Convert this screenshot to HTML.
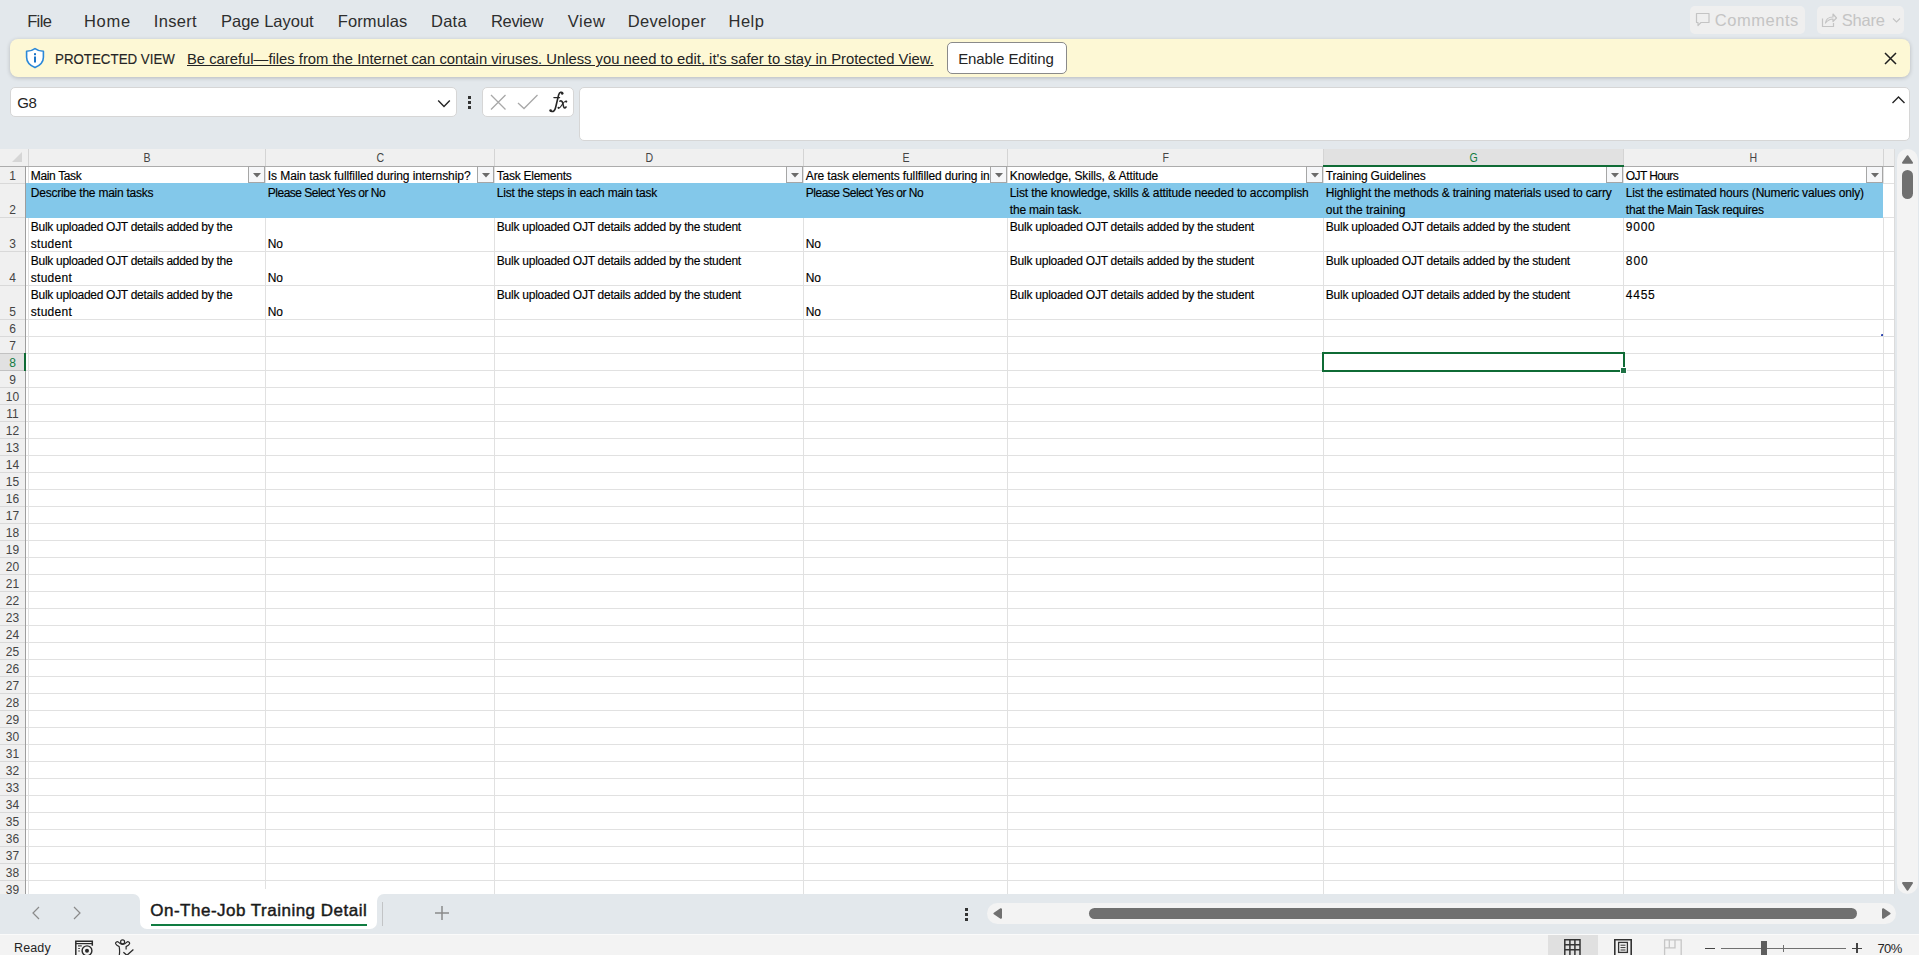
<!DOCTYPE html>
<html><head><meta charset="utf-8"><style>
html,body{margin:0;padding:0;}
body{width:1919px;height:955px;overflow:hidden;position:relative;background:#e3e8ec;font-family:"Liberation Sans", sans-serif;}
.a{position:absolute;}
.t{position:absolute;white-space:pre;font-family:"Liberation Sans", sans-serif;}
</style></head><body>
<div class="a" style="left:1690px;top:6px;width:115px;height:28px;background:#efefef;border-radius:5px;"></div><div class="a" style="left:1817px;top:6px;width:87px;height:28px;background:#efefef;border-radius:5px;"></div><div class="a" style="left:10px;top:39px;width:1900px;height:38px;background:#fdf8d5;border-radius:8px;box-shadow:0 1px 4px rgba(0,0,0,0.2);"></div><div class="a" style="left:947px;top:42px;width:120px;height:32px;background:#ffffff;border:1px solid #8a8a8a;border-radius:5px;box-sizing:border-box;"></div><div class="a" style="left:10px;top:87px;width:447px;height:30px;background:#fff;border:1px solid #d6d6d6;border-radius:5px;box-sizing:border-box;"></div><div class="a" style="left:482px;top:87px;width:92px;height:30px;background:#fff;border:1px solid #d6d6d6;border-radius:5px;box-sizing:border-box;"></div><div class="a" style="left:579px;top:87px;width:331px;height:54px;background:#fff;border:1px solid #d6d6d6;border-radius:5px;box-sizing:border-box;width:1331px;"></div><div class="a" style="left:468px;top:96px;width:3px;height:3px;background:#333;"></div><div class="a" style="left:468px;top:101px;width:3px;height:3px;background:#333;"></div><div class="a" style="left:468px;top:106px;width:3px;height:3px;background:#333;"></div><div class="a" style="left:0px;top:149px;width:1894px;height:745px;background:#ffffff;"></div><div class="a" style="left:0px;top:149px;width:1894px;height:17px;background:#f0f0f0;"></div><div class="a" style="left:0px;top:149px;width:25px;height:745px;background:#f0f0f0;"></div><div class="a" style="left:1323px;top:149px;width:300px;height:17px;background:#e1e1e1;"></div><div class="a" style="left:0px;top:166px;width:1894px;height:1px;background:#acacac;"></div><div class="a" style="left:0px;top:354px;width:25px;height:16px;background:#e1e1e1;"></div><div class="a" style="left:26px;top:183px;width:1857px;height:35px;background:#83c8ea;"></div><div class="a" style="left:0px;top:251px;width:25px;height:1px;background:#d9d9d9;"></div><div class="a" style="left:26px;top:251px;width:1868px;height:1px;background:#e1e1e1;"></div><div class="a" style="left:0px;top:285px;width:25px;height:1px;background:#d9d9d9;"></div><div class="a" style="left:26px;top:285px;width:1868px;height:1px;background:#e1e1e1;"></div><div class="a" style="left:0px;top:319px;width:25px;height:1px;background:#d9d9d9;"></div><div class="a" style="left:26px;top:319px;width:1868px;height:1px;background:#e1e1e1;"></div><div class="a" style="left:0px;top:336px;width:25px;height:1px;background:#d9d9d9;"></div><div class="a" style="left:26px;top:336px;width:1868px;height:1px;background:#e1e1e1;"></div><div class="a" style="left:0px;top:353px;width:25px;height:1px;background:#d9d9d9;"></div><div class="a" style="left:26px;top:353px;width:1868px;height:1px;background:#e1e1e1;"></div><div class="a" style="left:0px;top:370px;width:25px;height:1px;background:#d9d9d9;"></div><div class="a" style="left:26px;top:370px;width:1868px;height:1px;background:#e1e1e1;"></div><div class="a" style="left:0px;top:387px;width:25px;height:1px;background:#d9d9d9;"></div><div class="a" style="left:26px;top:387px;width:1868px;height:1px;background:#e1e1e1;"></div><div class="a" style="left:0px;top:404px;width:25px;height:1px;background:#d9d9d9;"></div><div class="a" style="left:26px;top:404px;width:1868px;height:1px;background:#e1e1e1;"></div><div class="a" style="left:0px;top:421px;width:25px;height:1px;background:#d9d9d9;"></div><div class="a" style="left:26px;top:421px;width:1868px;height:1px;background:#e1e1e1;"></div><div class="a" style="left:0px;top:438px;width:25px;height:1px;background:#d9d9d9;"></div><div class="a" style="left:26px;top:438px;width:1868px;height:1px;background:#e1e1e1;"></div><div class="a" style="left:0px;top:455px;width:25px;height:1px;background:#d9d9d9;"></div><div class="a" style="left:26px;top:455px;width:1868px;height:1px;background:#e1e1e1;"></div><div class="a" style="left:0px;top:472px;width:25px;height:1px;background:#d9d9d9;"></div><div class="a" style="left:26px;top:472px;width:1868px;height:1px;background:#e1e1e1;"></div><div class="a" style="left:0px;top:489px;width:25px;height:1px;background:#d9d9d9;"></div><div class="a" style="left:26px;top:489px;width:1868px;height:1px;background:#e1e1e1;"></div><div class="a" style="left:0px;top:506px;width:25px;height:1px;background:#d9d9d9;"></div><div class="a" style="left:26px;top:506px;width:1868px;height:1px;background:#e1e1e1;"></div><div class="a" style="left:0px;top:523px;width:25px;height:1px;background:#d9d9d9;"></div><div class="a" style="left:26px;top:523px;width:1868px;height:1px;background:#e1e1e1;"></div><div class="a" style="left:0px;top:540px;width:25px;height:1px;background:#d9d9d9;"></div><div class="a" style="left:26px;top:540px;width:1868px;height:1px;background:#e1e1e1;"></div><div class="a" style="left:0px;top:557px;width:25px;height:1px;background:#d9d9d9;"></div><div class="a" style="left:26px;top:557px;width:1868px;height:1px;background:#e1e1e1;"></div><div class="a" style="left:0px;top:574px;width:25px;height:1px;background:#d9d9d9;"></div><div class="a" style="left:26px;top:574px;width:1868px;height:1px;background:#e1e1e1;"></div><div class="a" style="left:0px;top:591px;width:25px;height:1px;background:#d9d9d9;"></div><div class="a" style="left:26px;top:591px;width:1868px;height:1px;background:#e1e1e1;"></div><div class="a" style="left:0px;top:608px;width:25px;height:1px;background:#d9d9d9;"></div><div class="a" style="left:26px;top:608px;width:1868px;height:1px;background:#e1e1e1;"></div><div class="a" style="left:0px;top:625px;width:25px;height:1px;background:#d9d9d9;"></div><div class="a" style="left:26px;top:625px;width:1868px;height:1px;background:#e1e1e1;"></div><div class="a" style="left:0px;top:642px;width:25px;height:1px;background:#d9d9d9;"></div><div class="a" style="left:26px;top:642px;width:1868px;height:1px;background:#e1e1e1;"></div><div class="a" style="left:0px;top:659px;width:25px;height:1px;background:#d9d9d9;"></div><div class="a" style="left:26px;top:659px;width:1868px;height:1px;background:#e1e1e1;"></div><div class="a" style="left:0px;top:676px;width:25px;height:1px;background:#d9d9d9;"></div><div class="a" style="left:26px;top:676px;width:1868px;height:1px;background:#e1e1e1;"></div><div class="a" style="left:0px;top:693px;width:25px;height:1px;background:#d9d9d9;"></div><div class="a" style="left:26px;top:693px;width:1868px;height:1px;background:#e1e1e1;"></div><div class="a" style="left:0px;top:710px;width:25px;height:1px;background:#d9d9d9;"></div><div class="a" style="left:26px;top:710px;width:1868px;height:1px;background:#e1e1e1;"></div><div class="a" style="left:0px;top:727px;width:25px;height:1px;background:#d9d9d9;"></div><div class="a" style="left:26px;top:727px;width:1868px;height:1px;background:#e1e1e1;"></div><div class="a" style="left:0px;top:744px;width:25px;height:1px;background:#d9d9d9;"></div><div class="a" style="left:26px;top:744px;width:1868px;height:1px;background:#e1e1e1;"></div><div class="a" style="left:0px;top:761px;width:25px;height:1px;background:#d9d9d9;"></div><div class="a" style="left:26px;top:761px;width:1868px;height:1px;background:#e1e1e1;"></div><div class="a" style="left:0px;top:778px;width:25px;height:1px;background:#d9d9d9;"></div><div class="a" style="left:26px;top:778px;width:1868px;height:1px;background:#e1e1e1;"></div><div class="a" style="left:0px;top:795px;width:25px;height:1px;background:#d9d9d9;"></div><div class="a" style="left:26px;top:795px;width:1868px;height:1px;background:#e1e1e1;"></div><div class="a" style="left:0px;top:812px;width:25px;height:1px;background:#d9d9d9;"></div><div class="a" style="left:26px;top:812px;width:1868px;height:1px;background:#e1e1e1;"></div><div class="a" style="left:0px;top:829px;width:25px;height:1px;background:#d9d9d9;"></div><div class="a" style="left:26px;top:829px;width:1868px;height:1px;background:#e1e1e1;"></div><div class="a" style="left:0px;top:846px;width:25px;height:1px;background:#d9d9d9;"></div><div class="a" style="left:26px;top:846px;width:1868px;height:1px;background:#e1e1e1;"></div><div class="a" style="left:0px;top:863px;width:25px;height:1px;background:#d9d9d9;"></div><div class="a" style="left:26px;top:863px;width:1868px;height:1px;background:#e1e1e1;"></div><div class="a" style="left:0px;top:880px;width:25px;height:1px;background:#d9d9d9;"></div><div class="a" style="left:26px;top:880px;width:1868px;height:1px;background:#e1e1e1;"></div><div class="a" style="left:0px;top:897px;width:25px;height:1px;background:#d9d9d9;"></div><div class="a" style="left:26px;top:897px;width:1868px;height:1px;background:#e1e1e1;"></div><div class="a" style="left:0px;top:183px;width:25px;height:1px;background:#d9d9d9;"></div><div class="a" style="left:0px;top:217px;width:25px;height:1px;background:#d9d9d9;"></div><div class="a" style="left:1883px;top:217px;width:11px;height:1px;background:#e1e1e1;"></div><div class="a" style="left:1883px;top:183px;width:11px;height:1px;background:#e1e1e1;"></div><div class="a" style="left:1881px;top:334px;width:2px;height:2px;background:#3048b0;border-radius:1px 0 0 0;"></div><div class="a" style="left:1894px;top:149px;width:1px;height:745px;background:#dcdcdc;"></div><div class="a" style="left:265px;top:149px;width:1px;height:17px;background:#d4d4d4;"></div><div class="a" style="left:265px;top:167px;width:1px;height:16px;background:#e1e1e1;"></div><div class="a" style="left:265px;top:218px;width:1px;height:676px;background:#e1e1e1;"></div><div class="a" style="left:494px;top:149px;width:1px;height:17px;background:#d4d4d4;"></div><div class="a" style="left:494px;top:167px;width:1px;height:16px;background:#e1e1e1;"></div><div class="a" style="left:494px;top:218px;width:1px;height:676px;background:#e1e1e1;"></div><div class="a" style="left:803px;top:149px;width:1px;height:17px;background:#d4d4d4;"></div><div class="a" style="left:803px;top:167px;width:1px;height:16px;background:#e1e1e1;"></div><div class="a" style="left:803px;top:218px;width:1px;height:676px;background:#e1e1e1;"></div><div class="a" style="left:1007px;top:149px;width:1px;height:17px;background:#d4d4d4;"></div><div class="a" style="left:1007px;top:167px;width:1px;height:16px;background:#e1e1e1;"></div><div class="a" style="left:1007px;top:218px;width:1px;height:676px;background:#e1e1e1;"></div><div class="a" style="left:1323px;top:149px;width:1px;height:17px;background:#d4d4d4;"></div><div class="a" style="left:1323px;top:167px;width:1px;height:16px;background:#e1e1e1;"></div><div class="a" style="left:1323px;top:218px;width:1px;height:676px;background:#e1e1e1;"></div><div class="a" style="left:1623px;top:149px;width:1px;height:17px;background:#d4d4d4;"></div><div class="a" style="left:1623px;top:167px;width:1px;height:16px;background:#e1e1e1;"></div><div class="a" style="left:1623px;top:218px;width:1px;height:676px;background:#e1e1e1;"></div><div class="a" style="left:1883px;top:149px;width:1px;height:17px;background:#d4d4d4;"></div><div class="a" style="left:1883px;top:167px;width:1px;height:16px;background:#e1e1e1;"></div><div class="a" style="left:1883px;top:218px;width:1px;height:676px;background:#e1e1e1;"></div><div class="a" style="left:25px;top:166px;width:1px;height:728px;background:#9e9e9e;"></div><div class="a" style="left:28px;top:149px;width:1px;height:17px;background:#d4d4d4;"></div><div class="a" style="left:28px;top:167px;width:1px;height:16px;background:#e1e1e1;"></div><div class="a" style="left:28px;top:218px;width:1px;height:676px;background:#e1e1e1;"></div><div class="a" style="left:26px;top:183px;width:2px;height:35px;background:#83c8ea;"></div><div class="a" style="left:0px;top:353px;width:24px;height:1px;background:#c2c2c2;"></div><div class="a" style="left:0px;top:370px;width:24px;height:1px;background:#c2c2c2;"></div><div class="a" style="left:24px;top:353px;width:2px;height:18px;background:#0f6b35;"></div><svg class="a" style="left:11px;top:152px" width="12" height="11"><polygon points="11,0 11,10 1,10" fill="#d6d6d6"/></svg><div class="a" style="left:248px;top:166px;width:17px;height:17px;background:#f6f7f9;border:1px solid #a6a6a6;box-sizing:border-box;"></div><svg class="a" style="left:253px;top:173px" width="8" height="5"><polygon points="0,0 8,0 4,4.5" fill="#6b6b6b"/></svg><div class="a" style="left:477px;top:166px;width:17px;height:17px;background:#f6f7f9;border:1px solid #a6a6a6;box-sizing:border-box;"></div><svg class="a" style="left:482px;top:173px" width="8" height="5"><polygon points="0,0 8,0 4,4.5" fill="#6b6b6b"/></svg><div class="a" style="left:786px;top:166px;width:17px;height:17px;background:#f6f7f9;border:1px solid #a6a6a6;box-sizing:border-box;"></div><svg class="a" style="left:791px;top:173px" width="8" height="5"><polygon points="0,0 8,0 4,4.5" fill="#6b6b6b"/></svg><div class="a" style="left:990px;top:166px;width:17px;height:17px;background:#f6f7f9;border:1px solid #a6a6a6;box-sizing:border-box;"></div><svg class="a" style="left:995px;top:173px" width="8" height="5"><polygon points="0,0 8,0 4,4.5" fill="#6b6b6b"/></svg><div class="a" style="left:1306px;top:166px;width:17px;height:17px;background:#f6f7f9;border:1px solid #a6a6a6;box-sizing:border-box;"></div><svg class="a" style="left:1311px;top:173px" width="8" height="5"><polygon points="0,0 8,0 4,4.5" fill="#6b6b6b"/></svg><div class="a" style="left:1606px;top:166px;width:17px;height:17px;background:#f6f7f9;border:1px solid #a6a6a6;box-sizing:border-box;"></div><svg class="a" style="left:1611px;top:173px" width="8" height="5"><polygon points="0,0 8,0 4,4.5" fill="#6b6b6b"/></svg><div class="a" style="left:1866px;top:166px;width:17px;height:17px;background:#f6f7f9;border:1px solid #a6a6a6;box-sizing:border-box;"></div><svg class="a" style="left:1871px;top:173px" width="8" height="5"><polygon points="0,0 8,0 4,4.5" fill="#6b6b6b"/></svg><div class="a" style="left:1323px;top:165px;width:301px;height:2px;background:#0f6b35;"></div><div class="a" style="left:1322px;top:352px;width:303px;height:20px;border:2px solid #0f6b35;box-sizing:border-box;"></div><div class="a" style="left:1620px;top:367px;width:5px;height:5px;background:#1e7145;border:1px solid #fff;box-sizing:content-box;"></div><div class="a" style="left:1897px;top:149px;width:21px;height:745px;background:#f3f3f3;border-radius:10.5px;"></div><svg class="a" style="left:1901px;top:154px" width="13" height="11"><polygon points="6.5,2.2 11,8.8 2,8.8" fill="#707070" stroke="#707070" stroke-width="2" stroke-linejoin="round"/></svg><div class="a" style="left:1902px;top:170px;width:11px;height:29px;background:#707070;border-radius:5.5px;"></div><svg class="a" style="left:1901px;top:881px" width="13" height="11"><polygon points="2,2 11,2 6.5,8.6" fill="#707070" stroke="#707070" stroke-width="2" stroke-linejoin="round"/></svg><div class="a" style="left:0px;top:894px;width:1919px;height:40px;background:#e3e8ec;"></div><div class="a" style="left:132px;top:894px;width:8px;height:8px;background:#ffffff;"></div><div class="a" style="left:377px;top:894px;width:8px;height:8px;background:#ffffff;"></div><div class="a" style="left:120px;top:894px;width:20px;height:20px;background:#e3e8ec;border-radius:0 7px 0 0;"></div><div class="a" style="left:377px;top:894px;width:20px;height:20px;background:#e3e8ec;border-radius:7px 0 0 0;"></div><div class="a" style="left:140px;top:889px;width:237px;height:40px;background:#ffffff;border-radius:0 0 7px 7px;"></div><div class="a" style="left:151px;top:924px;width:216px;height:2px;background:#107c41;"></div><div class="a" style="left:382px;top:902px;width:1px;height:24px;background:#c2c4c6;"></div><div class="a" style="left:987px;top:903px;width:909px;height:21px;background:#f3f3f3;border-radius:10.5px;"></div><div class="a" style="left:1089px;top:908px;width:768px;height:11px;background:#707070;border-radius:5.5px;"></div><svg class="a" style="left:992px;top:907px" width="11" height="13"><polygon points="9,2.2 9,10.8 2.4,6.5" fill="#707070" stroke="#707070" stroke-width="2" stroke-linejoin="round"/></svg><svg class="a" style="left:1881px;top:907px" width="11" height="13"><polygon points="2,2.2 2,10.8 8.6,6.5" fill="#707070" stroke="#707070" stroke-width="2" stroke-linejoin="round"/></svg><div class="a" style="left:965px;top:908px;width:3px;height:3px;background:#333;"></div><div class="a" style="left:965px;top:913px;width:3px;height:3px;background:#333;"></div><div class="a" style="left:965px;top:918px;width:3px;height:3px;background:#333;"></div><div class="a" style="left:0px;top:934px;width:1919px;height:21px;background:#f3f3f3;"></div><div class="a" style="left:0px;top:934px;width:1919px;height:1px;background:#fafafa;"></div><div class="a" style="left:1548px;top:935px;width:50px;height:20px;background:#e0e0e0;"></div><div class="a" style="left:1705px;top:947.5px;width:10px;height:1.2px;background:#444;"></div><div class="a" style="left:1721px;top:948px;width:125px;height:1px;background:#707070;"></div><div class="a" style="left:1761px;top:941px;width:6px;height:14px;background:#5e5e5e;"></div><div class="a" style="left:1783px;top:945px;width:1px;height:7px;background:#707070;"></div><div class="a" style="left:1852px;top:947.5px;width:10px;height:1.2px;background:#444;"></div><div class="a" style="left:1856.4px;top:943px;width:1.2px;height:10px;background:#444;"></div>
<svg class="a" style="left:24px;top:47px" width="22" height="22" viewBox="0 0 22 22">
<path d="M11 1.6 C8.2 3.6 5.6 4.3 2.6 4.3 L2.6 10.2 C2.6 15 6 18.4 11 20.6 C16 18.4 19.4 15 19.4 10.2 L19.4 4.3 C16.4 4.3 13.8 3.6 11 1.6 Z" fill="#ffffff" stroke="#2b88d8" stroke-width="1.6" stroke-linejoin="round"/>
<rect x="10" y="9.5" width="2" height="6" fill="#1a73c7"/><rect x="10" y="6.2" width="2" height="2" fill="#1a73c7"/></svg><svg class="a" style="left:1884px;top:52px" width="13" height="13"><path d="M1 1 L12 12 M12 1 L1 12" stroke="#1f1f1f" stroke-width="1.5"/></svg><svg class="a" style="left:1695px;top:12px" width="16" height="15"><path d="M1.5 1.5 H14 V10.5 H6 L3 13.5 V10.5 H1.5 Z" fill="none" stroke="#c4c4c4" stroke-width="1.2" stroke-linejoin="round"/></svg><svg class="a" style="left:1821px;top:11px" width="17" height="17"><path d="M1.5 7.5 V15.5 H12.5 V12" fill="none" stroke="#c4c4c4" stroke-width="1.2"/><path d="M4.5 12 C5 8 8 6 12 6 V3 L15.5 7 L12 10.5 V8 C9 8 6.5 9.5 4.5 12 Z" fill="none" stroke="#c4c4c4" stroke-width="1.2" stroke-linejoin="round"/></svg><svg class="a" style="left:1892px;top:17px" width="9" height="7"><path d="M1 1.5 L4.5 5 L8 1.5" fill="none" stroke="#c4c4c4" stroke-width="1.2"/></svg><svg class="a" style="left:437px;top:99px" width="14" height="10"><path d="M1.2 1.5 L7 7.5 L12.8 1.5" fill="none" stroke="#242424" stroke-width="1.4"/></svg><svg class="a" style="left:490px;top:94px" width="17" height="17"><path d="M1 1 L15.5 15.5 M15.5 1 L1 15.5" stroke="#a8a8a8" stroke-width="1.3"/></svg><svg class="a" style="left:517px;top:94px" width="22" height="16"><path d="M1 9 L7 14.5 L20.5 1" fill="none" stroke="#a8a8a8" stroke-width="1.3"/></svg><svg class="a" style="left:540px;top:86px" width="40" height="32" viewBox="0 0 40 32"><g fill="none" stroke="#262626" stroke-linecap="round"><path d="M22.6 7.2 C21.8 5.6 19.6 5.9 18.6 9 L15.6 21.5 C14.9 24.6 13.4 25.9 11.2 25.3" stroke-width="1.6"/><path d="M13.9 11.6 H19.6" stroke-width="1.3"/><path d="M19.9 15.1 C21.3 14.4 22.2 15.3 22.6 16.8 L23.6 20.6 C24.1 22.4 25.1 22.4 26 21" stroke-width="1.6"/><path d="M26.4 15.4 C25.2 14.9 24.2 15.6 22.7 17.7 L20.6 20.7 C19.8 21.8 19.1 22 18.5 21.6" stroke-width="1.1"/></g><g fill="#262626"><circle cx="22.2" cy="7.5" r="1.2"/><circle cx="10.6" cy="24.6" r="1.3"/><circle cx="26.2" cy="15.6" r="1.1"/><circle cx="18.6" cy="21.8" r="1.1"/></g></svg><svg class="a" style="left:1891px;top:95px" width="15" height="10"><path d="M1.5 8 L7.5 2 L13.5 8" fill="none" stroke="#242424" stroke-width="1.4"/></svg><svg class="a" style="left:31px;top:906px" width="10" height="14"><path d="M8 1 L2 7 L8 13" fill="none" stroke="#8a8a8a" stroke-width="1.2"/></svg><svg class="a" style="left:72px;top:906px" width="10" height="14"><path d="M2 1 L8 7 L2 13" fill="none" stroke="#8a8a8a" stroke-width="1.2"/></svg><svg class="a" style="left:434px;top:905px" width="16" height="16"><path d="M8 1 V15 M1 8 H15" stroke="#8a8a8a" stroke-width="1.5"/></svg><svg class="a" style="left:70px;top:935px" width="70" height="20" viewBox="70 935 70 20"><g fill="none" stroke="#2a2a2a"><path d="M75.8 955 V941.2 H92.3 V945.8" stroke-width="1.5"/><path d="M76 943.6 H92.3" stroke-width="1.2"/><path d="M78 945.9 H81.8" stroke-width="1.1"/><path d="M78.3 948.5 H79.8 M78.3 951 H79.8" stroke-width="1.2"/><circle cx="87" cy="950.8" r="4.9" stroke-width="1.4"/></g><circle cx="87" cy="950.8" r="2" fill="#2a2a2a"/><g fill="none" stroke="#2a2a2a" stroke-width="1.2" stroke-linejoin="round"><circle cx="122.6" cy="941.9" r="2"/><path d="M119.3 955 C119.8 952 119.6 949 119.2 946.6 C117.6 946 116 945.2 115.6 943.7 C115.3 942.2 117.2 941 118.4 942.2 C119.5 943.4 120.8 944.3 122.6 944.3 C124.4 944.3 125.8 943.4 126.9 942.2 C128 941 129.9 942.2 129.6 943.7 C129.3 945.1 127.9 945.9 126.1 946.6 V949.5"/><path d="M123.4 952.3 L126.9 955.3 L133.4 949.6" stroke-width="1.3"/></g></svg><svg class="a" style="left:1545px;top:933px" width="155" height="22" viewBox="1545 933 155 22"><g fill="none" stroke="#333"><path d="M1564.8 955 V939.8 H1580 V955 M1564.8 944.8 H1580 M1564.8 949.8 H1580 M1569.9 939.8 V955 M1574.9 939.8 V955" stroke-width="1.5"/><path d="M1614.8 955 V939.8 H1631.2 V955" stroke-width="1.6"/><rect x="1618.6" y="942.4" width="8.8" height="10" stroke-width="1.3"/><path d="M1620.5 945.2 H1625.5 M1620.5 947.6 H1625.5 M1620.5 950 H1625.5" stroke-width="1"/></g><path d="M1664.6 955 V939.8 H1681.2 V955 M1664.6 947.8 H1675 V939.8 M1669.3 939.8 V947.8" fill="none" stroke="#c6c6c6" stroke-width="1.3"/></svg>
<span class="t" style="left:27.14px;top:13.03px;font-size:16.5px;line-height:16.5px;color:#2e2e2e;letter-spacing:-0.591px;">File</span>
<span class="t" style="left:83.94px;top:13.03px;font-size:16.5px;line-height:16.5px;color:#2e2e2e;letter-spacing:0.701px;">Home</span>
<span class="t" style="left:153.74px;top:13.03px;font-size:16.5px;line-height:16.5px;color:#2e2e2e;letter-spacing:0.328px;">Insert</span>
<span class="t" style="left:221.04px;top:13.03px;font-size:16.5px;line-height:16.5px;color:#2e2e2e;letter-spacing:-0.005px;">Page Layout</span>
<span class="t" style="left:337.74px;top:13.03px;font-size:16.5px;line-height:16.5px;color:#2e2e2e;letter-spacing:0.108px;">Formulas</span>
<span class="t" style="left:430.94px;top:13.03px;font-size:16.5px;line-height:16.5px;color:#2e2e2e;letter-spacing:0.287px;">Data</span>
<span class="t" style="left:491.04px;top:13.03px;font-size:16.5px;line-height:16.5px;color:#2e2e2e;letter-spacing:-0.358px;">Review</span>
<span class="t" style="left:567.64px;top:13.03px;font-size:16.5px;line-height:16.5px;color:#2e2e2e;letter-spacing:0.617px;">View</span>
<span class="t" style="left:627.74px;top:13.03px;font-size:16.5px;line-height:16.5px;color:#2e2e2e;letter-spacing:0.338px;">Developer</span>
<span class="t" style="left:728.54px;top:13.03px;font-size:16.5px;line-height:16.5px;color:#2e2e2e;letter-spacing:0.461px;">Help</span>
<span class="t" style="left:1714.84px;top:12.03px;font-size:16.5px;line-height:16.5px;color:#c4c4c4;letter-spacing:0.534px;">Comments</span>
<span class="t" style="left:1841.84px;top:12.03px;font-size:16.5px;line-height:16.5px;color:#c4c4c4;letter-spacing:-0.253px;">Share</span>
<span class="t" style="left:55.20px;top:51.30px;font-size:15px;line-height:15px;color:#242424;letter-spacing:0.000px;transform:scaleX(0.8878);transform-origin:0 0;-webkit-text-stroke:0.15px #242424;">PROTECTED VIEW</span>
<span class="t" style="left:187.01px;top:52.47px;font-size:14.8px;line-height:14.8px;color:#242424;letter-spacing:-0.002px;text-decoration:underline;text-underline-offset:1px;">Be careful—files from the Internet can contain viruses. Unless you need to edit, it's safer to stay in Protected View.</span>
<span class="t" style="left:958.15px;top:51.30px;font-size:15px;line-height:15px;color:#242424;letter-spacing:-0.081px;">Enable Editing</span>
<span class="t" style="left:17.20px;top:94.70px;font-size:15px;line-height:15px;color:#242424;letter-spacing:-0.316px;">G8</span>
<span class="t" style="left:30.82px;top:169.84px;font-size:12px;line-height:12px;color:#000000;letter-spacing:-0.357px;-webkit-text-stroke:0.15px #000;">Main Task</span>
<span class="t" style="left:267.82px;top:169.84px;font-size:12px;line-height:12px;color:#000000;letter-spacing:-0.082px;-webkit-text-stroke:0.15px #000;">Is Main task fullfilled during internship?</span>
<span class="t" style="left:496.82px;top:169.84px;font-size:12px;line-height:12px;color:#000000;letter-spacing:-0.256px;-webkit-text-stroke:0.15px #000;">Task Elements</span>
<span class="t" style="left:805.82px;top:169.84px;font-size:12px;line-height:12px;color:#000000;letter-spacing:-0.130px;-webkit-text-stroke:0.15px #000;">Are task elements fullfilled during in</span>
<span class="t" style="left:1009.82px;top:169.84px;font-size:12px;line-height:12px;color:#000000;letter-spacing:-0.133px;-webkit-text-stroke:0.15px #000;">Knowledge, Skills, &amp; Attitude</span>
<span class="t" style="left:1325.82px;top:169.84px;font-size:12px;line-height:12px;color:#000000;letter-spacing:-0.166px;-webkit-text-stroke:0.15px #000;">Training Guidelines</span>
<span class="t" style="left:1625.82px;top:169.84px;font-size:12px;line-height:12px;color:#000000;letter-spacing:-0.605px;-webkit-text-stroke:0.15px #000;">OJT Hours</span>
<span class="t" style="left:30.82px;top:186.84px;font-size:12px;line-height:12px;color:#000000;letter-spacing:-0.241px;-webkit-text-stroke:0.15px #000;">Describe the main tasks</span>
<span class="t" style="left:267.82px;top:186.84px;font-size:12px;line-height:12px;color:#000000;letter-spacing:-0.500px;-webkit-text-stroke:0.15px #000;">Please Select Yes or No</span>
<span class="t" style="left:496.82px;top:186.84px;font-size:12px;line-height:12px;color:#000000;letter-spacing:-0.228px;-webkit-text-stroke:0.15px #000;">List the steps in each main task</span>
<span class="t" style="left:805.82px;top:186.84px;font-size:12px;line-height:12px;color:#000000;letter-spacing:-0.500px;-webkit-text-stroke:0.15px #000;">Please Select Yes or No</span>
<span class="t" style="left:1009.82px;top:186.84px;font-size:12px;line-height:12px;color:#000000;letter-spacing:-0.127px;-webkit-text-stroke:0.15px #000;">List the knowledge, skills &amp; attitude needed to accomplish</span>
<span class="t" style="left:1009.82px;top:203.84px;font-size:12px;line-height:12px;color:#000000;letter-spacing:-0.211px;-webkit-text-stroke:0.15px #000;">the main task.</span>
<span class="t" style="left:1325.82px;top:186.84px;font-size:12px;line-height:12px;color:#000000;letter-spacing:-0.161px;-webkit-text-stroke:0.15px #000;">Highlight the methods &amp; training materials used to carry</span>
<span class="t" style="left:1325.82px;top:203.84px;font-size:12px;line-height:12px;color:#000000;letter-spacing:0.011px;-webkit-text-stroke:0.15px #000;">out the training</span>
<span class="t" style="left:1625.82px;top:186.84px;font-size:12px;line-height:12px;color:#000000;letter-spacing:-0.189px;-webkit-text-stroke:0.15px #000;">List the estimated hours (Numeric values only)</span>
<span class="t" style="left:1625.82px;top:203.84px;font-size:12px;line-height:12px;color:#000000;letter-spacing:-0.219px;-webkit-text-stroke:0.15px #000;">that the Main Task requires</span>
<span class="t" style="left:30.82px;top:220.84px;font-size:12px;line-height:12px;color:#000000;letter-spacing:-0.293px;-webkit-text-stroke:0.15px #000;">Bulk uploaded OJT details added by the</span>
<span class="t" style="left:30.82px;top:237.84px;font-size:12px;line-height:12px;color:#000000;letter-spacing:0.264px;-webkit-text-stroke:0.15px #000;">student</span>
<span class="t" style="left:267.82px;top:237.84px;font-size:12px;line-height:12px;color:#000000;letter-spacing:-0.134px;-webkit-text-stroke:0.15px #000;">No</span>
<span class="t" style="left:496.82px;top:220.84px;font-size:12px;line-height:12px;color:#000000;letter-spacing:-0.243px;-webkit-text-stroke:0.15px #000;">Bulk uploaded OJT details added by the student</span>
<span class="t" style="left:805.82px;top:237.84px;font-size:12px;line-height:12px;color:#000000;letter-spacing:-0.134px;-webkit-text-stroke:0.15px #000;">No</span>
<span class="t" style="left:1009.82px;top:220.84px;font-size:12px;line-height:12px;color:#000000;letter-spacing:-0.243px;-webkit-text-stroke:0.15px #000;">Bulk uploaded OJT details added by the student</span>
<span class="t" style="left:1325.82px;top:220.84px;font-size:12px;line-height:12px;color:#000000;letter-spacing:-0.243px;-webkit-text-stroke:0.15px #000;">Bulk uploaded OJT details added by the student</span>
<span class="t" style="left:1625.82px;top:220.84px;font-size:12px;line-height:12px;color:#000000;letter-spacing:0.752px;-webkit-text-stroke:0.15px #000;">9000</span>
<span class="t" style="left:30.82px;top:254.84px;font-size:12px;line-height:12px;color:#000000;letter-spacing:-0.293px;-webkit-text-stroke:0.15px #000;">Bulk uploaded OJT details added by the</span>
<span class="t" style="left:30.82px;top:271.84px;font-size:12px;line-height:12px;color:#000000;letter-spacing:0.264px;-webkit-text-stroke:0.15px #000;">student</span>
<span class="t" style="left:267.82px;top:271.84px;font-size:12px;line-height:12px;color:#000000;letter-spacing:-0.134px;-webkit-text-stroke:0.15px #000;">No</span>
<span class="t" style="left:496.82px;top:254.84px;font-size:12px;line-height:12px;color:#000000;letter-spacing:-0.243px;-webkit-text-stroke:0.15px #000;">Bulk uploaded OJT details added by the student</span>
<span class="t" style="left:805.82px;top:271.84px;font-size:12px;line-height:12px;color:#000000;letter-spacing:-0.134px;-webkit-text-stroke:0.15px #000;">No</span>
<span class="t" style="left:1009.82px;top:254.84px;font-size:12px;line-height:12px;color:#000000;letter-spacing:-0.243px;-webkit-text-stroke:0.15px #000;">Bulk uploaded OJT details added by the student</span>
<span class="t" style="left:1325.82px;top:254.84px;font-size:12px;line-height:12px;color:#000000;letter-spacing:-0.243px;-webkit-text-stroke:0.15px #000;">Bulk uploaded OJT details added by the student</span>
<span class="t" style="left:1625.82px;top:254.84px;font-size:12px;line-height:12px;color:#000000;letter-spacing:0.964px;-webkit-text-stroke:0.15px #000;">800</span>
<span class="t" style="left:30.82px;top:288.84px;font-size:12px;line-height:12px;color:#000000;letter-spacing:-0.293px;-webkit-text-stroke:0.15px #000;">Bulk uploaded OJT details added by the</span>
<span class="t" style="left:30.82px;top:305.84px;font-size:12px;line-height:12px;color:#000000;letter-spacing:0.264px;-webkit-text-stroke:0.15px #000;">student</span>
<span class="t" style="left:267.82px;top:305.84px;font-size:12px;line-height:12px;color:#000000;letter-spacing:-0.134px;-webkit-text-stroke:0.15px #000;">No</span>
<span class="t" style="left:496.82px;top:288.84px;font-size:12px;line-height:12px;color:#000000;letter-spacing:-0.243px;-webkit-text-stroke:0.15px #000;">Bulk uploaded OJT details added by the student</span>
<span class="t" style="left:805.82px;top:305.84px;font-size:12px;line-height:12px;color:#000000;letter-spacing:-0.134px;-webkit-text-stroke:0.15px #000;">No</span>
<span class="t" style="left:1009.82px;top:288.84px;font-size:12px;line-height:12px;color:#000000;letter-spacing:-0.243px;-webkit-text-stroke:0.15px #000;">Bulk uploaded OJT details added by the student</span>
<span class="t" style="left:1325.82px;top:288.84px;font-size:12px;line-height:12px;color:#000000;letter-spacing:-0.243px;-webkit-text-stroke:0.15px #000;">Bulk uploaded OJT details added by the student</span>
<span class="t" style="left:1625.82px;top:288.84px;font-size:12px;line-height:12px;color:#000000;letter-spacing:0.752px;-webkit-text-stroke:0.15px #000;">4455</span>
<span class="t" style="left:9.16px;top:170.34px;font-size:12px;line-height:12px;color:#444444;letter-spacing:0.000px;">1</span>
<span class="t" style="left:9.16px;top:204.34px;font-size:12px;line-height:12px;color:#444444;letter-spacing:0.000px;">2</span>
<span class="t" style="left:9.16px;top:238.34px;font-size:12px;line-height:12px;color:#444444;letter-spacing:0.000px;">3</span>
<span class="t" style="left:9.16px;top:272.34px;font-size:12px;line-height:12px;color:#444444;letter-spacing:0.000px;">4</span>
<span class="t" style="left:9.16px;top:306.34px;font-size:12px;line-height:12px;color:#444444;letter-spacing:0.000px;">5</span>
<span class="t" style="left:9.16px;top:323.34px;font-size:12px;line-height:12px;color:#444444;letter-spacing:0.000px;">6</span>
<span class="t" style="left:9.16px;top:340.34px;font-size:12px;line-height:12px;color:#444444;letter-spacing:0.000px;">7</span>
<span class="t" style="left:9.16px;top:357.34px;font-size:12px;line-height:12px;color:#107c41;letter-spacing:0.000px;">8</span>
<span class="t" style="left:9.16px;top:374.34px;font-size:12px;line-height:12px;color:#444444;letter-spacing:0.000px;">9</span>
<span class="t" style="left:5.82px;top:391.34px;font-size:12px;line-height:12px;color:#444444;letter-spacing:0.000px;">10</span>
<span class="t" style="left:6.27px;top:408.34px;font-size:12px;line-height:12px;color:#444444;letter-spacing:0.000px;">11</span>
<span class="t" style="left:5.82px;top:425.34px;font-size:12px;line-height:12px;color:#444444;letter-spacing:0.000px;">12</span>
<span class="t" style="left:5.82px;top:442.34px;font-size:12px;line-height:12px;color:#444444;letter-spacing:0.000px;">13</span>
<span class="t" style="left:5.82px;top:459.34px;font-size:12px;line-height:12px;color:#444444;letter-spacing:0.000px;">14</span>
<span class="t" style="left:5.82px;top:476.34px;font-size:12px;line-height:12px;color:#444444;letter-spacing:0.000px;">15</span>
<span class="t" style="left:5.82px;top:493.34px;font-size:12px;line-height:12px;color:#444444;letter-spacing:0.000px;">16</span>
<span class="t" style="left:5.82px;top:510.34px;font-size:12px;line-height:12px;color:#444444;letter-spacing:0.000px;">17</span>
<span class="t" style="left:5.82px;top:527.34px;font-size:12px;line-height:12px;color:#444444;letter-spacing:0.000px;">18</span>
<span class="t" style="left:5.82px;top:544.34px;font-size:12px;line-height:12px;color:#444444;letter-spacing:0.000px;">19</span>
<span class="t" style="left:5.82px;top:561.34px;font-size:12px;line-height:12px;color:#444444;letter-spacing:0.000px;">20</span>
<span class="t" style="left:5.82px;top:578.34px;font-size:12px;line-height:12px;color:#444444;letter-spacing:0.000px;">21</span>
<span class="t" style="left:5.82px;top:595.34px;font-size:12px;line-height:12px;color:#444444;letter-spacing:0.000px;">22</span>
<span class="t" style="left:5.82px;top:612.34px;font-size:12px;line-height:12px;color:#444444;letter-spacing:0.000px;">23</span>
<span class="t" style="left:5.82px;top:629.34px;font-size:12px;line-height:12px;color:#444444;letter-spacing:0.000px;">24</span>
<span class="t" style="left:5.82px;top:646.34px;font-size:12px;line-height:12px;color:#444444;letter-spacing:0.000px;">25</span>
<span class="t" style="left:5.82px;top:663.34px;font-size:12px;line-height:12px;color:#444444;letter-spacing:0.000px;">26</span>
<span class="t" style="left:5.82px;top:680.34px;font-size:12px;line-height:12px;color:#444444;letter-spacing:0.000px;">27</span>
<span class="t" style="left:5.82px;top:697.34px;font-size:12px;line-height:12px;color:#444444;letter-spacing:0.000px;">28</span>
<span class="t" style="left:5.82px;top:714.34px;font-size:12px;line-height:12px;color:#444444;letter-spacing:0.000px;">29</span>
<span class="t" style="left:5.82px;top:731.34px;font-size:12px;line-height:12px;color:#444444;letter-spacing:0.000px;">30</span>
<span class="t" style="left:5.82px;top:748.34px;font-size:12px;line-height:12px;color:#444444;letter-spacing:0.000px;">31</span>
<span class="t" style="left:5.82px;top:765.34px;font-size:12px;line-height:12px;color:#444444;letter-spacing:0.000px;">32</span>
<span class="t" style="left:5.82px;top:782.34px;font-size:12px;line-height:12px;color:#444444;letter-spacing:0.000px;">33</span>
<span class="t" style="left:5.82px;top:799.34px;font-size:12px;line-height:12px;color:#444444;letter-spacing:0.000px;">34</span>
<span class="t" style="left:5.82px;top:816.34px;font-size:12px;line-height:12px;color:#444444;letter-spacing:0.000px;">35</span>
<span class="t" style="left:5.82px;top:833.34px;font-size:12px;line-height:12px;color:#444444;letter-spacing:0.000px;">36</span>
<span class="t" style="left:5.82px;top:850.34px;font-size:12px;line-height:12px;color:#444444;letter-spacing:0.000px;">37</span>
<span class="t" style="left:5.82px;top:867.34px;font-size:12px;line-height:12px;color:#444444;letter-spacing:0.000px;">38</span>
<span class="t" style="left:5.82px;top:884.34px;font-size:12px;line-height:12px;color:#444444;letter-spacing:0.000px;">39</span>
<span class="t" style="left:143.29px;top:151.64px;font-size:12px;line-height:12px;color:#444444;letter-spacing:0.000px;transform:scaleX(0.88);">B</span>
<span class="t" style="left:375.96px;top:151.64px;font-size:12px;line-height:12px;color:#444444;letter-spacing:0.000px;transform:scaleX(0.88);">C</span>
<span class="t" style="left:644.96px;top:151.64px;font-size:12px;line-height:12px;color:#444444;letter-spacing:0.000px;transform:scaleX(0.88);">D</span>
<span class="t" style="left:901.79px;top:151.64px;font-size:12px;line-height:12px;color:#444444;letter-spacing:0.000px;transform:scaleX(0.88);">E</span>
<span class="t" style="left:1162.13px;top:151.64px;font-size:12px;line-height:12px;color:#444444;letter-spacing:0.000px;transform:scaleX(0.88);">F</span>
<span class="t" style="left:1469.13px;top:151.64px;font-size:12px;line-height:12px;color:#107c41;letter-spacing:0.000px;transform:scaleX(0.88);">G</span>
<span class="t" style="left:1749.46px;top:151.64px;font-size:12px;line-height:12px;color:#444444;letter-spacing:0.000px;transform:scaleX(0.88);">H</span>
<span class="t" style="left:150.32px;top:902.31px;font-size:17px;line-height:17px;color:#1a1a1a;letter-spacing:0.491px;-webkit-text-stroke:0.45px #1a1a1a;">On-The-Job Training Detail</span>
<span class="t" style="left:14.10px;top:941.82px;font-size:12.5px;line-height:12.5px;color:#242424;letter-spacing:0.115px;">Ready</span>
<span class="t" style="left:1877.48px;top:942.00px;font-size:13px;line-height:13px;color:#242424;letter-spacing:-0.646px;">70%</span>
</body></html>
